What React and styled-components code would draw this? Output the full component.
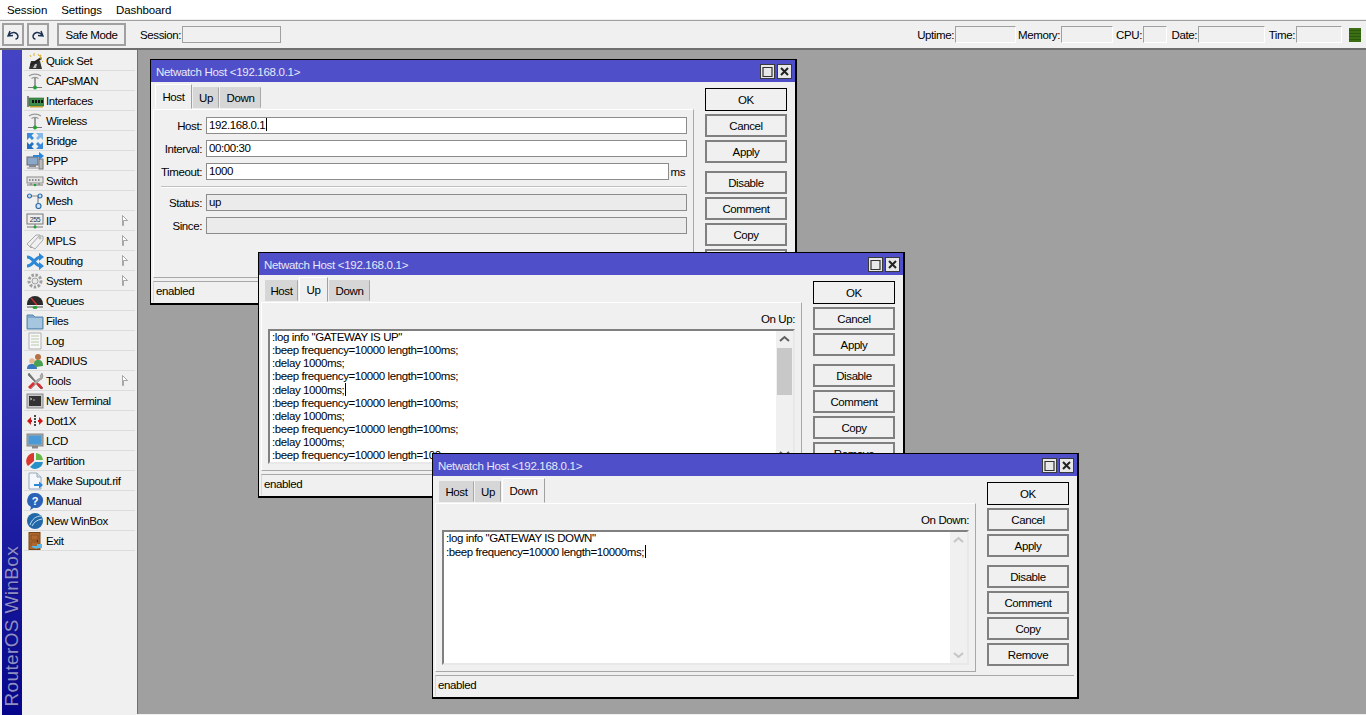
import React from "react";
import styled, { createGlobalStyle } from "styled-components";

const Global = createGlobalStyle`
  html, body { margin: 0; padding: 0; height: 100%; overflow: hidden; background: #f0f0f0; }
  body, button { font-family: "Liberation Sans", Arial, sans-serif; font-size: 11.5px; letter-spacing: -0.4px; color: #000; }
  #root { height: 100%; }
  * { box-sizing: border-box; }
`;

const Page = styled.div`width:1366px;height:715px;display:flex;flex-direction:column;overflow:hidden;`;
const MenuBar = styled.nav`height:19px;background:#fff;display:flex;align-items:center;padding:1px 0 0 7px;gap:14px;flex:none;letter-spacing:-.1px;`;
const MenuItem = styled.span`line-height:17px;`;
const Toolbar = styled.header`height:30px;flex:none;margin-top:1px;background:#f0f0f0;border-top:1px solid #a0a0a0;border-bottom:2px solid #6f6f6f;display:flex;align-items:center;padding:0 5px 0 2px;`;
const ToolBtn = styled.button`width:${p=>p.$w}px;height:23px;flex:none;padding:0;margin-right:${p=>p.$mr||0}px;background:#f0f0f0;border:2px solid #a0a0a0;display:flex;align-items:center;justify-content:center;`;
const Spacer = styled.div`flex:1;`;
const InfoLabel = styled.span`margin-left:${p=>p.$ml||0}px;width:${p=>p.$w}px;flex:none;display:flex;justify-content:flex-end;white-space:nowrap;`;
const InfoBox = styled.div`width:${p=>p.$w}px;height:17px;flex:none;margin-left:1px;border:1px solid;border-color:#a0a0a0 #fff #fff #a0a0a0;`;
const SessionBox = styled(InfoBox)`height:17px;border:1px solid #a0a0a0;margin-left:1px;`;
const Led = styled.div`width:12px;height:14px;margin-left:7px;flex:none;background:repeating-linear-gradient(#3c6e14 0 2px,#2c5a0c 2px 3px);`;
const Main = styled.div`flex:1;display:flex;min-height:0;`;
const Sidebar = styled.aside`width:137px;flex:none;display:flex;background:#f0f0f0;padding-left:2px;`;
const Brand = styled.div`width:20px;flex:none;background:linear-gradient(#4343c4,#2f2fb4 50%,#06068c);display:flex;align-items:flex-start;padding-bottom:9px;flex-direction:column;justify-content:flex-end;`;
const BrandText = styled.span`writing-mode:vertical-rl;transform:rotate(180deg);font-size:19px;line-height:20px;color:#8f8fc4;text-shadow:-1px 1px 1px #10107a;white-space:nowrap;letter-spacing:.35px;`;
const MenuList = styled.ul`list-style:none;margin:0;padding:1px 2px 0 2px;flex:1;`;
const Row = styled.li`height:20px;border-bottom:1px solid #dcdcdc;display:flex;align-items:center;position:relative;padding-left:2px;`;
const RowIcon = styled.svg`width:18px;height:18px;flex:none;margin-right:2px;`;
const RowArrow = styled.svg`margin-left:auto;margin-right:7px;width:6px;height:11px;`;
const Workspace = styled.main`flex:1;position:relative;background:#a0a0a0;border-left:1px solid #6f6f6f;overflow:hidden;margin-bottom:1px;`;

const Win = styled.section`position:absolute;left:${p=>p.$x}px;top:${p=>p.$y}px;width:647px;height:246px;background:#f0f0f0;border:1px solid #000;border-right-width:2px;border-bottom-width:2px;display:flex;flex-direction:column;overflow:hidden;`;
const TitleBar = styled.div`height:22px;flex:none;background:#4f50c9;color:#e8e8f8;display:flex;align-items:center;padding:0 3px 0 5px;letter-spacing:-.3px;`;
const TitleText = styled.span`flex:1;padding-top:1px;`;
const WinBtn = styled.button`width:15px;height:15px;margin-left:2px;padding:0;background:#e8e8e8;border:1.5px solid #3a3a3a;display:flex;align-items:center;justify-content:center;`;
const WinBody = styled.div`flex:1;display:flex;padding:2px 0 0 2px;min-height:0;`;
const LeftCol = styled.div`width:541px;flex:none;display:flex;flex-direction:column;`;
const Tabs = styled.div`height:25px;flex:none;display:flex;align-items:flex-end;padding-left:${p=>p.$pl}px;gap:1px;`;
const Tab = styled.div`height:${p=>p.$on?25:21}px;margin-bottom:${p=>p.$on?0:1}px;width:${p=>p.$w}px;display:flex;align-items:${p=>p.$on?"flex-start":"center"};justify-content:center;padding-top:${p=>p.$on?6:0}px;background:${p=>p.$on?"#f0f0f0":"#d6d6d6"};border:1px solid;border-color:${p=>p.$on?"#fff #a0a0a0 transparent #fff":"#d6d6d6 #a8a8a8 #d6d6d6 #d6d6d6"};`;
const Panel = styled.div`height:169px;flex:none;background:#f0f0f0;border:1px solid;border-color:#fff #a8a8a8 #a8a8a8 #fff;padding:7px 6px 0 ${p=>p.$pl||0}px;`;
const Fields = styled.div`display:flex;flex-direction:column;gap:6px;`;
const FieldRow = styled.div`display:flex;align-items:center;height:17px;`;
const FieldLabel = styled.label`width:48px;flex:none;text-align:right;margin-right:4px;white-space:nowrap;`;
const Field = styled.div`flex:1;height:17px;background:${p=>p.$ro?"#ebebeb":"#fff"};border:1px solid #8c8c8c;line-height:15px;padding-left:2px;display:flex;`;
const Suffix = styled.span`width:18px;flex:none;text-align:right;padding-right:2px;`;
const Sep = styled.div`height:2px;margin-left:7px;border-top:1px solid #c0c0c0;border-bottom:1px solid #fff;`;
const Caret = styled.span`display:inline-block;width:1px;height:13px;margin-left:1px;background:#000;vertical-align:-2px;`;
const EditLabel = styled.div`height:19px;text-align:right;line-height:18px;`;
const Editor = styled.div`height:135px;display:flex;background:#fff;border:2px solid;border-color:#808080 #e8e8e8 #e8e8e8 #808080;overflow:hidden;`;
const Lines = styled.div`flex:1;padding:0 0 0 2px;line-height:13px;white-space:pre;overflow:hidden;`;
const Scroll = styled.div`width:17px;flex:none;background:#f0f0f0;display:flex;flex-direction:column;align-items:center;`;
const ScrollArrow = styled.svg`width:15px;height:17px;flex:none;`;
const Thumb = styled.div`width:15px;height:47px;background:#c8c8c8;`;
const ScrollFill = styled.div`flex:1;`;
const StatusBar = styled.div`height:21px;flex:none;margin-top:3px;border-top:1px solid #a8a8a8;line-height:19px;padding-left:2px;border-left:1px solid #d8d8d8;width:${p=>p.$w}px;`;
const Buttons = styled.div`width:82px;flex:none;margin:4px 0 0 11px;display:flex;flex-direction:column;gap:3px;`;
const Btn = styled.button`height:23px;flex:none;padding:0;background:#f0f0f0;border:2px solid ${p=>p.$main?"#000":"#808080"};border-width:${p=>p.$main?"1.5px":"2px"};margin-top:${p=>p.$gap?5:0}px;`;

const G = "#25a032";
const antenna = <g fill="none"><path d="M3 4c3-2.500 9-2.500 12 0M5.500 6.500c2-1.300 5-1.300 7 0" stroke="#9a9a9a" strokeWidth="1.100"/><path d="M9 6v9" stroke="#777" strokeWidth="1.400"/><path d="M2 15.500h14" stroke="#777"/><circle cx="9" cy="15.500" r="2" fill={G}/></g>;
const icons = {
  wand: <g><path d="M3 17l2-8h9l2 8z" fill="#333"/><path d="M4 12l11-7 1 2-11 7z" fill="#222"/><path d="M12 2l1 2 2-1-1 2 2 1-2 1M4 3l1 2M8 1v3M16 9l1 1" stroke="#d8b030" fill="none"/><path d="M7 16l2-4h2l-1 4z" fill="#bbb"/></g>,
  antenna,
  iface: <g><rect x="1" y="4" width="2" height="11" fill="#888"/><rect x="3" y="6" width="15" height="8" fill="#3d8d4a" stroke="#2b6a35" strokeWidth=".6"/><path d="M6 8h2v3H6zM9 8h2v3H9zM12 8h2v3h-2zM15 8h2v3h-2z" fill="#111"/><path d="M4 14h13v1.500H4z" fill="#c0a030"/></g>,
  bridge: <g fill="#3a8ad8"><path d="M1 1h7l-2.500 2.500L8 6 6 8 3.500 5.500 1 8z"/><path d="M17 1v7l-2.500-2.500L12 8l-2-2 2.500-2.500L10 1z" fill="#86b8e8"/><path d="M1 17v-7l2.500 2.500L6 10l2 2-2.500 2.500L8 17z" fill="#2470c0"/><path d="M17 17h-7l2.500-2.500L10 12l2-2 2.500 2.500L17 10z"/></g>,
  ppp: <g><rect x="1" y="5" width="11" height="8" fill="#8aa8c8" stroke="#667"/><rect x="3" y="13" width="7" height="2" fill="#888"/><rect x="13" y="7" width="4" height="10" fill="#bbb" stroke="#777"/><path d="M7 3h6V0l5 4-5 4V5H7z" fill="#2a86d8"/><path d="M1 16h11" stroke="#889"/></g>,
  sw: <g><rect x="1" y="5" width="16" height="6" fill="#e4e4e4" stroke="#8a8a8a"/><path d="M3 8h1.500M6 8h1.500M9 8h1.500M12 8h1.500" stroke="#333"/><path d="M1 13h16" stroke="#777"/><path d="M5 11v2M13 11v2" stroke="#777"/><circle cx="9" cy="13" r="1.300" fill={G}/></g>,
  mesh: <g fill="#d4e4f4" stroke="#2e6ea8" strokeWidth="1.200"><path d="M4 4h10M12 5v8" fill="none" stroke="#888"/><circle cx="3.500" cy="4" r="2"/><circle cx="14" cy="4" r="2"/><circle cx="12.500" cy="14" r="2.500"/></g>,
  ip: <g><rect x="1" y="2" width="16" height="10" fill="#eee" stroke="#777"/><text x="9" y="10" fontSize="7" fontFamily="Liberation Sans" textAnchor="middle" fill="#333">255</text><path d="M1 15h16" stroke="#777"/><path d="M9 12v3" stroke="#777"/><circle cx="9" cy="15" r="1.500" fill={G}/></g>,
  mpls: <g fill="#f0f0f0" stroke="#a8a8a8"><path d="M1 12L10 3h4v4l-9 9z"/><path d="M4 14l9-10h4v4l-8 9z"/><circle cx="14" cy="6" r="1"/></g>,
  routing: <g fill="none" stroke="#2e88d8" strokeWidth="3"><path d="M1 5c7 0 7 9 14 9"/><path d="M1 14c7 0 7-9 14-9"/><path d="M13 1l5 4-5 4zM13 10l5 4-5 4z" fill="#2e88d8" stroke="none"/></g>,
  gear: <g fill="none" stroke="#a0a0a0"><circle cx="9" cy="9" r="6" strokeWidth="3" strokeDasharray="2.500 1.500"/><circle cx="9" cy="9" r="3" fill="#e8e8e8"/></g>,
  queues: <g><path d="M1 12a8 8 0 0116 0v1H1z" fill="#2a2a2a"/><path d="M5 6l6 7" stroke="#d83030" strokeWidth="1.300"/><path d="M1 15h16" stroke="#555"/><ellipse cx="9" cy="15.500" rx="2.500" ry="1.500" fill={G}/></g>,
  files: <g><path d="M1 3h6l2 2h8v12H1z" fill="#7fa8cc" stroke="#5b88ac"/><path d="M2 6h14v10H2z" fill="#a6c6e0"/></g>,
  log: <g><path d="M3 1h12v16H3z" fill="#f8f8f8" stroke="#b0b0b0"/><path d="M5 4h8M5 7h8M5 10h8M5 13h8" stroke="#b8c8b0"/></g>,
  radius: <g><circle cx="6" cy="9" r="2.800" fill="#e8b890"/><path d="M1 17c0-4 2-5 5-5s5 1 5 5z" fill="#3a78c0"/><circle cx="12" cy="5" r="3" fill="#b87040"/><path d="M8 13c0-4 1-5 4-5s5 1 5 6l-7 1z" fill="#48a050"/></g>,
  tools: <g><path d="M3 1l9 11 2 1 3 3-2 1-3-3-1-2L2 3z" fill="#777" stroke="#555" strokeWidth=".5"/><path d="M16 1l-2 3 1 2-3 1-9 8 2 2 9-9 2-1 1-3z" fill="#b0b0b0" stroke="#777" strokeWidth=".5"/><path d="M2 15l5-5 2 2-5 5z" fill="#d83030"/><path d="M10 12l3 3 2 2 2-1-3-4-2-1z" fill="#d83030"/></g>,
  term: <g><rect x="1" y="2" width="16" height="14" fill="#c8c8c8" stroke="#8a8a8a"/><rect x="3" y="4" width="12" height="10" fill="#333"/><path d="M4 6l2 1-2 1M7 8h2" stroke="#ddd" strokeWidth=".7" fill="none"/></g>,
  dot1x: <g fill="#d01818"><path d="M1 9l4-4v3h1v2H5v3z"/><path d="M17 9l-4-4v3h-1v2h1v3z"/><path d="M9 3v12" stroke="#111" strokeWidth="1.500" strokeDasharray="2 1"/></g>,
  lcd: <g><rect x="1" y="2" width="16" height="12" fill="#a8a8a8" stroke="#888"/><rect x="2.500" y="3.500" width="13" height="9" fill="#4a9ad8"/><rect x="6" y="14" width="6" height="2.500" fill="#888"/></g>,
  part: <g><path d="M8 1v8l-6 5A8 8 0 018 1z" fill="#d83830"/><path d="M10 1a8 8 0 017 7h-7z" fill="#68b848"/><path d="M4 15l5-5h8a8 8 0 01-13 5z" fill="#2890c8"/></g>,
  supout: <g><path d="M3 1h8l4 4v12H3z" fill="#f4f8fc" stroke="#98a8b8"/><path d="M11 1v4h4" fill="#d8e4f0" stroke="#98a8b8"/><path d="M8 12h5v-2.500l4 3.500-4 3.500V14H8z" fill="#2a88d8"/></g>,
  manual: <g><path d="M9 1a7.500 7.500 0 00-4 14l-1 3 4-2.200A7.500 7.500 0 109 1z" fill="#2a62b8"/><text x="9" y="13" fontSize="11" fontWeight="bold" fontFamily="Liberation Sans" textAnchor="middle" fill="#fff">?</text></g>,
  winbox: <g><circle cx="9" cy="9" r="8" fill="#2268a8"/><path d="M4 13C6 7 10 4 15 4M6 14c2-4 5-6 10-7" stroke="#bcdcf0" strokeWidth="1" fill="none"/></g>,
  exit: <g><rect x="3" y="0.500" width="11" height="17" fill="#b06830" stroke="#7a4418"/><path d="M5 3h7v5H5zM5 10h7v5H5z" fill="none" stroke="#8a5020"/><circle cx="11.500" cy="9" r=".8" fill="#222"/><path d="M6 14h5v-2l5 0v4h-5v1l-6-2z" fill="#58b8e8"/></g>,
};
const menu = [
  ["Quick Set","wand"],["CAPsMAN","antenna"],["Interfaces","iface"],["Wireless","antenna"],["Bridge","bridge"],["PPP","ppp"],["Switch","sw"],["Mesh","mesh"],["IP","ip",1],["MPLS","mpls",1],["Routing","routing",1],["System","gear",1],["Queues","queues"],["Files","files"],["Log","log"],["RADIUS","radius"],["Tools","tools",1],["New Terminal","term"],["Dot1X","dot1x"],["LCD","lcd"],["Partition","part"],["Make Supout.rif","supout"],["Manual","manual"],["New WinBox","winbox"],["Exit","exit"],
];

const TitleButtons = () => (
  <>
    <WinBtn aria-label="Maximize"><svg width="11" height="11" viewBox="0 0 11 11"><path d="M1 1.500h9v9H1z" fill="none" stroke="#333" strokeWidth="1.200"/></svg></WinBtn>
    <WinBtn aria-label="Close"><svg width="9" height="9" viewBox="0 0 9 9"><path d="M1 1l7 7M8 1L1 8" stroke="#222" strokeWidth="2"/></svg></WinBtn>
  </>
);
const tabWidths = { Host: [37,26,41], Up: [33,29,41], Down: [35,26,43] };
const Window = ({ x, y, tab, children }) => {
  const [h, u, d] = tabWidths[tab];
  return (
  <Win $x={x} $y={y}>
    <TitleBar><TitleText>Netwatch Host &lt;192.168.0.1&gt;</TitleText><TitleButtons /></TitleBar>
    <WinBody>
      <LeftCol>
        <Tabs $pl={tab==="Host"?2:4}>
          <Tab $w={h} $on={tab==="Host"}>Host</Tab>
          <Tab $w={u} $on={tab==="Up"}>Up</Tab>
          <Tab $w={d} $on={tab==="Down"}>Down</Tab>
        </Tabs>
        {children}
        <StatusBar $w={639}>enabled</StatusBar>
      </LeftCol>
      <Buttons>
        <Btn $main>OK</Btn><Btn>Cancel</Btn><Btn>Apply</Btn>
        <Btn $gap>Disable</Btn><Btn>Comment</Btn><Btn>Copy</Btn><Btn>Remove</Btn>
      </Buttons>
    </WinBody>
  </Win>
  );
};
const Arrow = ({ up, dim }) => (
  <ScrollArrow viewBox="0 0 15 17"><path d={up?"M3 10l4.500-4 4.500 4":"M3 7l4.500 4 4.500-4"} fill="none" stroke={dim?"#c4c4c4":"#606060"} strokeWidth="2"/></ScrollArrow>
);
const beep = ":beep frequency=10000 length=100ms;";
const delay = ":delay 1000ms;";

export default function App() {
  return (
    <Page>
      <Global />
      <MenuBar><MenuItem>Session</MenuItem><MenuItem>Settings</MenuItem><MenuItem>Dashboard</MenuItem></MenuBar>
      <Toolbar>
        <ToolBtn $w={22} $mr={3} aria-label="Undo"><svg width="14" height="14" viewBox="0 0 14 14"><path d="M4 3L2 8l5-.5M3 7c3-4 8-3 9 1 0 1.500-1 3-2.500 3" fill="none" stroke="#1c3050" strokeWidth="1.400"/></svg></ToolBtn>
        <ToolBtn $w={22} $mr={8} aria-label="Redo"><svg width="14" height="14" viewBox="0 0 14 14"><path d="M10 3l2 5-5-.5M11 7C8 3 3 4 2 8c0 1.500 1 3 2.500 3" fill="none" stroke="#1c3050" strokeWidth="1.400"/></svg></ToolBtn>
        <ToolBtn $w={69}>Safe Mode</ToolBtn>
        <InfoLabel $ml={14} $w={41}>Session:</InfoLabel><SessionBox $w={99} />
        <Spacer />
        <InfoLabel $w={35}>Uptime:</InfoLabel><InfoBox $w={61} />
        <InfoLabel $ml={5} $w={39}>Memory:</InfoLabel><InfoBox $w={52} />
        <InfoLabel $ml={4} $w={25}>CPU:</InfoLabel><InfoBox $w={24} />
        <InfoLabel $ml={5} $w={25}>Date:</InfoLabel><InfoBox $w={67} />
        <InfoLabel $ml={5} $w={25}>Time:</InfoLabel><InfoBox $w={46} />
        <Led />
      </Toolbar>
      <Main>
        <Sidebar>
          <Brand><BrandText>RouterOS WinBox</BrandText></Brand>
          <MenuList>
            {menu.map(([label, icon, sub]) => (
              <Row key={label}>
                <RowIcon viewBox="0 0 18 18">{icons[icon]}</RowIcon>
                {label}
                {sub && <RowArrow viewBox="0 0 6 11"><path d="M.5.500l5 5-4 0v5h-1z" fill="#fff" stroke="#909090" strokeWidth=".8"/></RowArrow>}
              </Row>
            ))}
          </MenuList>
        </Sidebar>
        <Workspace>
          <Window x={12} y={9} tab="Host">
            <Panel>
              <Fields>
                <FieldRow><FieldLabel>Host:</FieldLabel><Field>192.168.0.1<Caret /></Field></FieldRow>
                <FieldRow><FieldLabel>Interval:</FieldLabel><Field>00:00:30</Field></FieldRow>
                <FieldRow><FieldLabel>Timeout:</FieldLabel><Field>1000</Field><Suffix>ms</Suffix></FieldRow>
                <Sep />
                <FieldRow><FieldLabel>Status:</FieldLabel><Field $ro>up</Field></FieldRow>
                <FieldRow><FieldLabel>Since:</FieldLabel><Field $ro /></FieldRow>
              </Fields>
            </Panel>
          </Window>
          <Window x={120} y={202} tab="Up">
            <Panel $pl={6}>
              <EditLabel>On Up:</EditLabel>
              <Editor>
                <Lines>
                  <div>:log info "GATEWAY IS UP"</div>
                  <div>{beep}</div><div>{delay}</div><div>{beep}</div>
                  <div>{delay}<Caret /></div>
                  <div>{beep}</div><div>{delay}</div><div>{beep}</div><div>{delay}</div><div>{beep}</div>
                </Lines>
                <Scroll><Arrow up /><Thumb /><ScrollFill /><Arrow /></Scroll>
              </Editor>
            </Panel>
          </Window>
          <Window x={294} y={403} tab="Down">
            <Panel $pl={6}>
              <EditLabel>On Down:</EditLabel>
              <Editor>
                <Lines>
                  <div>:log info "GATEWAY IS DOWN"</div>
                  <div>:beep frequency=10000 length=10000ms;<Caret /></div>
                </Lines>
                <Scroll><Arrow up dim /><ScrollFill /><Arrow dim /></Scroll>
              </Editor>
            </Panel>
          </Window>
        </Workspace>
      </Main>
    </Page>
  );
}
